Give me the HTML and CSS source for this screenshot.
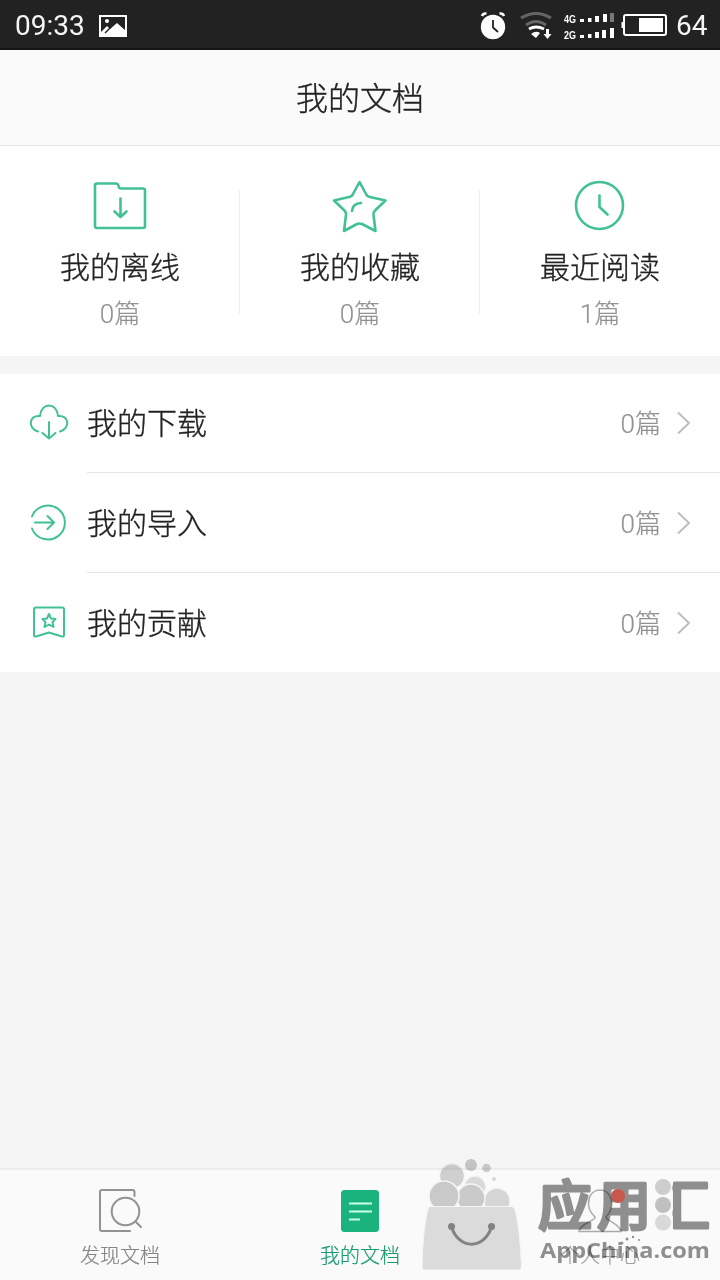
FILE: index.html
```html
<!DOCTYPE html>
<html lang="zh-CN">
<head>
<meta charset="utf-8">
<title>我的文档</title>
<link rel="stylesheet" href="styles.css">
</head>
<body>
<div class="app">
  <div class="status">
    <span class="time">09:33</span>
    <svg class="photo" width="28" height="22" viewBox="0 0 28 22"><rect x="1" y="1" width="26" height="20" fill="none" stroke="#fff" stroke-width="2"/><path d="M1 21V18L8 11L11 14L18 8L27 16V21Z" fill="#fff"/><path d="M6 18L12 12" stroke="#222" stroke-width="1.5"/><circle cx="8" cy="6" r="2" fill="#fff"/></svg>
    <svg class="indicators" width="188" height="32" viewBox="480 9 188 32">
      <circle cx="493" cy="27" r="12.2" fill="#fff"/>
      <path d="M493 20V27.5L498 32" fill="none" stroke="#222" stroke-width="1.8"/>
      <path d="M482 16Q483 13 486.500 13.500M499.500 13.500Q503 13 504 16" fill="none" stroke="#fff" stroke-width="2.500"/>
      <g fill="none" stroke-width="3"><path d="M521 18Q536 9 551 18M526 25Q536 18 546 25" stroke="#666"/><path d="M529 29Q536 25 544 29" stroke="#fff"/></g>
      <path d="M531 34Q536 30 540 33L536 38ZM546 29H549V34H551.500L547.500 39L543.500 34H546Z" fill="#fff"/>
      <text class="net" x="564" y="22.500" textLength="12" lengthAdjust="spacingAndGlyphs">4G</text>
      <text class="net" x="564" y="38.500" textLength="12" lengthAdjust="spacingAndGlyphs">2G</text>
      <path d="M580 19h4v3h-4zM588 18h3.500v4h-3.500zM595 16h4v6h-4zM603 14h4v8h-4zM580 35h4v3h-4zM588 34h3.500v4h-3.500zM595 32h4v6h-4zM602 30h4v8h-4zM610 28h4v10h-4z" fill="#fff"/>
      <path d="M610 13h4v9h-4z" fill="#777"/>
      <rect x="624" y="15" width="42" height="20" rx="2" fill="none" stroke="#fff" stroke-width="2"/>
      <path d="M639 18h24v14h-24zM621.500 22h2.500v6h-2.500z" fill="#fff"/>
    </svg>
    <span class="battery">64</span>
  </div>
  <header class="header">我的文档</header>
  <section class="stats">
    <div class="stat">
      <svg class="icon" width="60" height="60" viewBox="90 176 60 60"><path d="M97 183.500H116Q118 183.500 118.500 186Q119 188.500 121 188.500H143Q145 188.500 145 190.500V226Q145 228 143 228H97Q95 228 95 226V185.500Q95 183.500 97 183.500ZM120.500 198.500V216.500M114.500 211.500L120.500 217L126.500 211.500"/></svg>
      <div class="label">我的离线</div><div class="count">0篇</div>
    </div>
    <div class="stat">
      <svg class="icon" width="60" height="60" viewBox="330 176 60 60"><path d="M359.500 182L366 194Q367 196.500 370 197L385.500 200.500L375 210.500Q373 212.500 373.500 215L375.500 231L362 224Q359.500 223 357 224L344 231L346 215Q346.500 212.500 344.500 210.500L334 200.500L349 197Q352 196.500 353 194ZM352 211Q352.500 203.500 361 203"/></svg>
      <div class="label">我的收藏</div><div class="count">0篇</div>
    </div>
    <div class="stat">
      <svg class="icon" width="60" height="60" viewBox="570 176 60 60"><circle cx="599.5" cy="205.500" r="23.500"/><path d="M599.500 195.500V207L607.500 214.500"/></svg>
      <div class="label">最近阅读</div><div class="count">1篇</div>
    </div>
  </section>
  <section class="list">
    <div class="row">
      <svg class="icon thin" width="40" height="40" viewBox="29 403 40 40"><path d="M38 431.500C28 429 28 415 40 416C41 402 57 402 58 416C70 415 70 429 60 431.500M49 422V438M42.500 433L49 438.500L55.500 433"/></svg>
      <div class="cell"><span class="name">我的下载</span><span class="count">0篇</span><svg class="arrow" width="14" height="24" viewBox="0 0 14 24"><path d="M1 1.500L12 12L1 22.500"/></svg></div>
    </div>
    <div class="row">
      <svg class="icon thin" width="40" height="40" viewBox="29 503 40 40"><path d="M32 516.500A17 17 0 1 1 32 528.500M35 522.500H54M47.500 516L54 522.500L47.500 529"/></svg>
      <div class="cell"><span class="name">我的导入</span><span class="count">0篇</span><svg class="arrow" width="14" height="24" viewBox="0 0 14 24"><path d="M1 1.500L12 12L1 22.500"/></svg></div>
    </div>
    <div class="row">
      <svg class="icon thin" width="40" height="40" viewBox="29 603 40 40"><path d="M36 607.500H62Q64 607.500 64 609.500V635Q64 637 62 636.500L49 632.500L36 636.500Q34 637 34 635V609.500Q34 607.500 36 607.500Z"/><path d="M49 614L51 618.500L55.500 619L52.500 622L53.500 627L49 624.500L44.500 627L45.500 622L42.500 619L47 618.500Z"/></svg>
      <div class="cell"><span class="name">我的贡献</span><span class="count">0篇</span><svg class="arrow" width="14" height="24" viewBox="0 0 14 24"><path d="M1 1.500L12 12L1 22.500"/></svg></div>
    </div>
  </section>
  <nav class="tabs">
    <div class="tab">
      <svg class="tabicon" width="50" height="50" viewBox="95 1186 50 50"><path d="M134.500 1196V1192Q134.500 1190 132.500 1190H102Q100 1190 100 1192V1229Q100 1231 102 1231H130M136 1222L141 1227"/><circle cx="125.500" cy="1211.500" r="13.800"/></svg>
      <span>发现文档</span>
    </div>
    <div class="tab active">
      <svg width="50" height="50" viewBox="335 1186 50 50"><rect x="341" y="1190" width="38" height="42" rx="3.500" fill="#1bb37d"/><path d="M349 1203.500H372M349 1211.500H372M349 1219.500H360" stroke="#c7ffe9" stroke-width="2"/></svg>
      <span>我的文档</span>
    </div>
    <div class="tab faded">
      <svg class="tabicon" width="50" height="50" viewBox="575 1186 50 50"><path d="M595 1217C584 1207 588 1190 600 1190C612 1190 616 1207 606 1217C606 1221 619 1223 621 1231.500H579C580 1223 596 1221 595 1217Z"/></svg>
      <span>个人中心</span>
    </div>
  </nav>
  <div class="watermark">
    <svg class="bag" width="104" height="116" viewBox="420 1156 104 116">
      <g fill="#d3d3d3" stroke="#fafafa" stroke-width="1.500"><circle cx="452" cy="1176" r="12.500"/><circle cx="475" cy="1187" r="11" fill="#dedede"/><circle cx="497" cy="1201" r="13" fill="#dadada"/><circle cx="471" cy="1198" r="14" fill="#cecece"/><circle cx="444" cy="1196" r="15" fill="#cdcdcd"/></g>
      <circle cx="471" cy="1165" r="6" fill="#cbcbcb"/><circle cx="486.500" cy="1168" r="4.300" fill="#d0d0d0"/><circle cx="494" cy="1179" r="2" fill="#ddd"/>
      <path d="M430 1206.500H511Q514 1206.500 515 1210Q520 1228 521.500 1267Q521.500 1270 518 1270H425Q422 1270 422 1267Q423 1228 428 1209Q428.500 1206.500 430 1206.500Z" fill="#e0e0e0" stroke="#fafafa" stroke-width="1"/>
      <circle cx="451.500" cy="1226.500" r="3.500" fill="#858585"/><circle cx="491.500" cy="1226.500" r="3.500" fill="#858585"/><path d="M451.500 1227C459 1250 484 1250 491.500 1227" fill="none" stroke="#858585" stroke-width="3"/>
    </svg>
    <svg class="brand" width="184" height="110" viewBox="534 1165 184 110">
      <defs><linearGradient id="fade" gradientUnits="userSpaceOnUse" x1="672" x2="673" y1="0" y2="0"><stop offset="0" stop-color="#929292" stop-opacity="0"/><stop offset="1" stop-color="#929292"/></linearGradient></defs>
      <text class="brandname" x="538" y="1226">应</text>
      <text class="brandname" x="597" y="1226">用</text>
      <text class="brandname hui" x="656" y="1226">汇</text>
      <circle cx="663" cy="1187" r="8" fill="#d2d2d2"/><circle cx="663" cy="1205" r="8" fill="#c4c4c4"/><circle cx="663" cy="1222.500" r="8" fill="#dedede"/>
      <text class="domain" x="540" y="1257.500" textLength="170" lengthAdjust="spacingAndGlyphs">AppChina.com</text>
      <g fill="#939393"><circle cx="622" cy="1243" r="1.500"/><circle cx="627" cy="1239" r="1.500"/><circle cx="633" cy="1237" r="1.200"/><circle cx="639" cy="1240" r="1"/></g>
    </svg>
  </div>
  <span class="badge"></span>
</div>
</body>
</html>
```
FILE: styles.css
```css
* { box-sizing: border-box; }
body { margin: 0; background: #f5f5f5; font-family: Roboto, "Noto Sans CJK SC", sans-serif; font-weight: 300; color: #222; }
svg { display: block; flex: none; }
.app { position: relative; display: flex; flex-direction: column; width: 720px; height: 1280px; overflow: hidden; }
.status { display: flex; align-items: center; height: 50px; padding: 2px 12px 0 15px; background: #222; border-bottom: 2px solid #151515; color: #f5f5f5; font: 400 28px/50px Roboto, sans-serif; }
.time { width: 84px; padding-top: 1px; }
.photo { margin-top: 1px; }
.indicators { margin-left: auto; }
.battery { width: 40px; padding: 1px 0 0 8px; }
.net { font: 700 10px "Liberation Sans", sans-serif; fill: #fff; }
.header { height: 96px; padding-top: 2px; background: #fafafa; border-bottom: 1px solid #e3e3e3; text-align: center; font-size: 32px; line-height: 94px; -webkit-text-stroke: 0.35px currentColor; }
.stats { display: flex; height: 210px; background: #fff; }
.stat { position: relative; display: flex; flex: 1; flex-direction: column; align-items: center; padding-top: 30px; }
.stat + .stat::before { content: ""; position: absolute; left: -1px; top: 44px; width: 1px; height: 124px; background: #eee; }
.icon { fill: none; stroke: #42c194; stroke-width: 2.6; stroke-linejoin: round; stroke-linecap: round; }
.thin { stroke-width: 2; }
.label, .name { font-size: 30px; line-height: 44px; -webkit-text-stroke: 0.35px currentColor; }
.label { margin-top: 10px; }
.count { color: #929292; font-size: 26px; line-height: 38px; -webkit-text-stroke: 0.2px currentColor; }
.stat .count { margin-top: 5px; }
.list { margin-top: 18px; background: #fff; }
.row { display: flex; align-items: center; height: 100px; padding-left: 29px; }
.row:first-child { height: 99px; }
.row:last-child { height: 99px; }
.row:first-child .icon { margin-bottom: 2px; }
.cell { display: flex; align-items: center; flex: 1; height: 100%; margin-left: 18px; padding-right: 29px; border-bottom: 1px solid #e5e5e5; }
.row:last-child .cell { border: 0; }
.name { flex: 1; padding-top: 2px; }
.cell .count { padding-top: 2px; }
.arrow { margin: 0 0 0 16px; fill: none; stroke: #bebebe; stroke-width: 2; }
.tabs { display: flex; height: 112px; margin-top: auto; padding-top: 16px; background: #fafafa; border-top: 2px solid #ececec; color: #858585; font-size: 20px; line-height: 30px; }
.tab { display: flex; flex: 1; flex-direction: column; align-items: center; gap: 5px; }
.tab span { -webkit-text-stroke: 0.2px currentColor; }
.active { color: #199c70; }
.faded { color: #a0a0a0; }
.tabicon { fill: none; stroke: #929292; stroke-width: 2; stroke-linecap: round; stroke-linejoin: round; }
.faded .tabicon { stroke: #aaa; stroke-width: 1.6; }
.watermark { position: absolute; left: 420px; top: 1156px; display: flex; width: 300px; height: 124px; mix-blend-mode: multiply; }
.brand { margin: 9px 0 0 10px; }
.brandname { font: 500 54px "Noto Sans CJK SC", sans-serif; fill: #929292; stroke: #929292; stroke-width: 3px; stroke-linejoin: round; stroke-linecap: round; }
.hui { fill: url(#fade); stroke: url(#fade); }
.domain { font: 700 22px "Open Sans", sans-serif; fill: #929292; }
.badge { position: absolute; left: 611px; top: 1189px; width: 14px; height: 14px; border-radius: 50%; background: #c7584d; }
```
